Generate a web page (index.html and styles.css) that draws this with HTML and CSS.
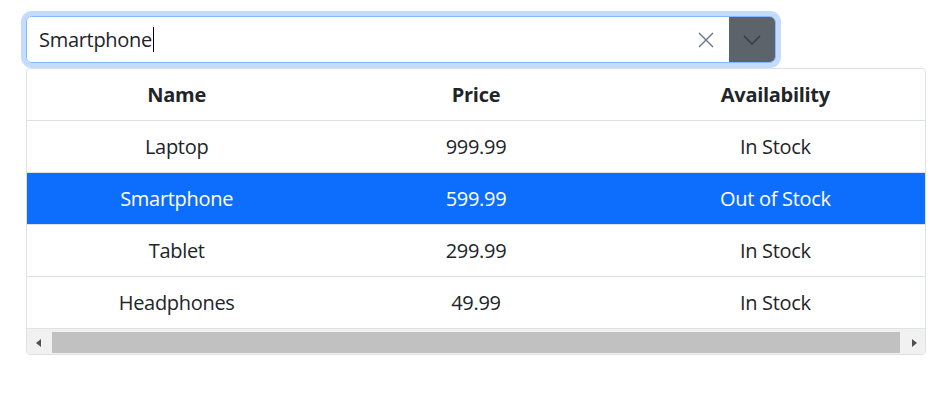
FILE: index.html
```html
<!DOCTYPE html>
<html lang="en">
<head>
<meta charset="utf-8">
<title>Combo Grid</title>
<link rel="stylesheet" href="styles.css">
</head>
<body>
<div class="page">
  <div class="combo">
    <div class="combo-input">
      <span class="combo-text">Smartphone</span><span class="caret"></span>
      <span class="clear">
        <svg width="18" height="18" viewBox="0 0 18 18"><path d="M2 2 L16 16 M16 2 L2 16" stroke="#6c757d" stroke-width="1.4" fill="none"/></svg>
      </span>
    </div>
    <div class="combo-btn">
      <svg width="18" height="10" viewBox="0 0 18 10"><path d="M1 1 L9 9 L17 1" stroke="#33383d" stroke-width="1.3" fill="none"/></svg>
    </div>
  </div>
  <div class="grid">
    <table class="tbl">
      <thead>
        <tr><th>Name</th><th>Price</th><th>Availability</th></tr>
      </thead>
      <tbody>
        <tr><td>Laptop</td><td>999.99</td><td>In Stock</td></tr>
        <tr class="selected"><td>Smartphone</td><td>599.99</td><td>Out of Stock</td></tr>
        <tr><td>Tablet</td><td>299.99</td><td>In Stock</td></tr>
        <tr class="last"><td>Headphones</td><td>49.99</td><td>In Stock</td></tr>
      </tbody>
    </table>
    <div class="hscroll">
      <div class="sb-btn"><span class="tri-left"></span></div>
      <div class="sb-track"><div class="sb-thumb"></div></div>
      <div class="sb-btn"><span class="tri-right"></span></div>
    </div>
  </div>
</div>
</body>
</html>
```
FILE: styles.css
```css
html, body {
  margin: 0;
  padding: 0;
  background: #fff;
}
body {
  font-family: "Open Sans", "Noto Sans", sans-serif;
  color: #212529;
}
.page {
  padding: 16px 0 0 26px;
  width: 900px;
}
.combo {
  display: flex;
  width: 750px;
  height: 47px;
  box-sizing: border-box;
  border: 1px solid #86b7fe;
  border-radius: 6px;
  box-shadow: 0 0 0 5px rgba(13, 110, 253, 0.25);
  overflow: hidden;
}
.combo-input {
  flex: 1;
  display: flex;
  align-items: center;
  padding-left: 12px;
  background: #fff;
}
.combo-text {
  font-size: 20px;
  color: #212529;
  letter-spacing: -0.3px;
}
.caret {
  display: inline-block;
  width: 1px;
  height: 25px;
  background: #000;
  margin-left: 1px;
}
.clear {
  margin-left: auto;
  margin-right: 14px;
  display: flex;
  align-items: center;
}
.combo-btn {
  width: 46px;
  background: #5c636a;
  display: flex;
  align-items: center;
  justify-content: center;
}
.grid {
  margin-top: 5px;
  width: 900px;
  box-sizing: border-box;
  border: 1px solid #dee2e6;
  border-radius: 4px;
  overflow: hidden;
}
.tbl {
  width: 100%;
  border-collapse: collapse;
  table-layout: fixed;
  font-size: 20px;
  letter-spacing: -0.3px;
}
.tbl th, .tbl td {
  height: 51px;
  padding: 0;
  text-align: center;
  border-bottom: 1px solid #dee2e6;
  vertical-align: middle;
}
.tbl th {
  font-weight: 700;
  color: #212529;
}
.tbl td {
  color: #212529;
}
.tbl tr.selected td {
  background: #0d6efd;
  color: #fff;
}
.hscroll {
  display: flex;
  height: 25px;
  background: #f1f1f1;
}
.sb-btn {
  width: 22px;
  display: flex;
  align-items: center;
  justify-content: center;
  padding-top: 2px;
}
.tri-left {
  width: 0;
  height: 0;
  border-top: 4.5px solid transparent;
  border-bottom: 4.5px solid transparent;
  border-right: 5px solid #505050;
}
.tri-right {
  width: 0;
  height: 0;
  border-top: 4.5px solid transparent;
  border-bottom: 4.5px solid transparent;
  border-left: 5px solid #505050;
}
.sb-track {
  flex: 1;
  display: flex;
  padding: 3px 3px 1px 3px;
}
.sb-thumb {
  flex: 1;
  background: #c1c1c1;
}
```
